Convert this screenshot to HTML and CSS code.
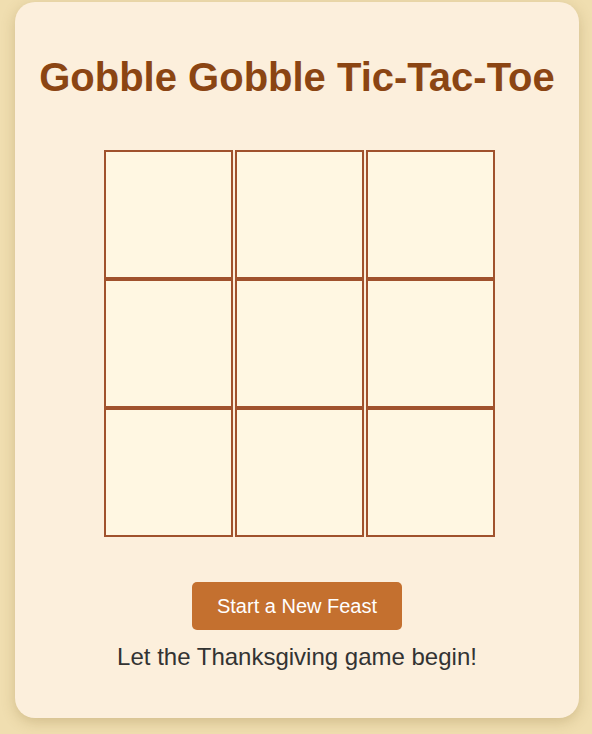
FILE: index.html
```html
<!DOCTYPE html>
<html lang="en">
<head>
<meta charset="utf-8">
<title>Gobble Gobble Tic-Tac-Toe</title>
<link rel="stylesheet" href="styles.css">
</head>
<body>
<main class="card">
  <h1 class="title">Gobble Gobble Tic-Tac-Toe</h1>
  <div class="board-wrap">
    <div class="board">
      <div class="cell"></div>
      <div class="cell"></div>
      <div class="cell"></div>
      <div class="cell"></div>
      <div class="cell"></div>
      <div class="cell"></div>
      <div class="cell"></div>
      <div class="cell"></div>
      <div class="cell"></div>
    </div>
  </div>
  <button class="reset">Start a New Feast</button>
  <p class="status">Let the Thanksgiving game begin!</p>
</main>
</body>
</html>
```

FILE: styles.css
```css
html, body {
  margin: 0;
  padding: 0;
}
body {
  background: #f0deb0;
  font-family: "Liberation Sans", Arial, sans-serif;
  padding: 2px 13px 16px 15px;
  min-height: 734px;
  box-sizing: border-box;
}
.card {
  background: #fcefdc;
  border-radius: 20px;
  box-shadow: 0 4px 14px rgba(120, 90, 30, 0.25);
  padding: 52px 20px 47px;
  text-align: center;
}
.title {
  margin: 0;
  font-size: 40px;
  line-height: 46px;
  font-weight: bold;
  color: #8b4513;
}
.board-wrap {
  display: flex;
  justify-content: center;
  padding-left: 5px;
  margin-top: 50px;
}
.board {
  display: grid;
  grid-template-columns: repeat(3, 129px);
  grid-auto-rows: 129px;
  column-gap: 2px;
  row-gap: 0;
}
.cell {
  box-sizing: border-box;
  background: #fff7e2;
  border: 2px solid #a0522d;
}
.reset {
  margin-top: 45px;
  background: #c4702f;
  color: #ffffff;
  border: none;
  border-radius: 5px;
  font-family: "Liberation Sans", Arial, sans-serif;
  font-size: 20px;
  line-height: 24px;
  padding: 12px 25px;
}
.status {
  margin: 13px 0 0;
  font-size: 24px;
  line-height: 28px;
  color: #333333;
}
```
